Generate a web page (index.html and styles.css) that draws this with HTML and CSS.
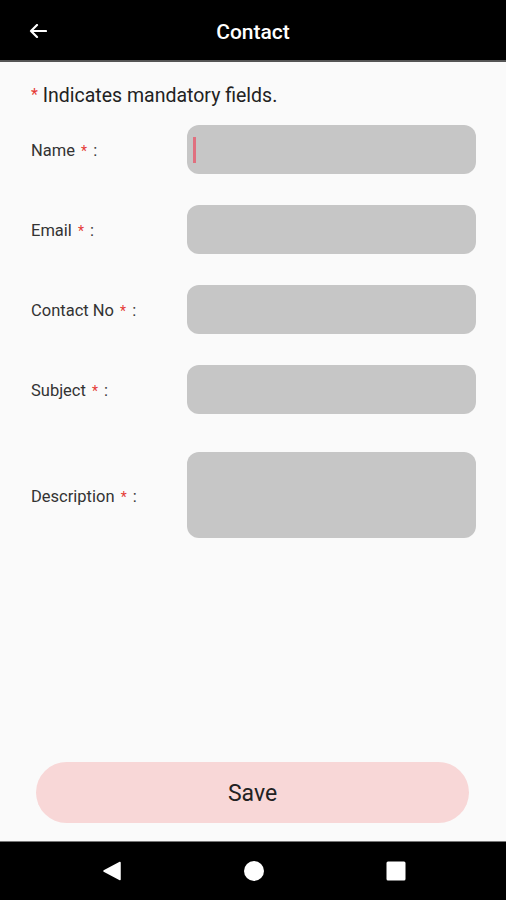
FILE: index.html
```html
<!DOCTYPE html>
<html lang="en">
  <head>
    <meta charset="UTF-8" />
    <title>Contact</title>
    <link rel="stylesheet" href="styles.css">
  </head>
  <body>
    <div class="screen">
      <div class="toolbar">
        <svg class="back" width="18" height="14" viewBox="0 0 18 14">
          <path d="M17 7H2M8 1L2 7l6 6" fill="none" stroke="#fff" stroke-width="2.2" stroke-linecap="round" stroke-linejoin="round" />
        </svg>
        <span class="title">Contact</span>
      </div>

      <div class="content">
        <p class="note"><span class="req">*</span> Indicates mandatory fields.</p>

        <div class="row">
          <label class="label">Name <span class="req">*</span> :</label>
          <div class="field focused"><span class="caret"></span></div>
        </div>
        <div class="row">
          <label class="label">Email <span class="req">*</span> :</label>
          <div class="field"></div>
        </div>
        <div class="row">
          <label class="label">Contact No <span class="req">*</span> :</label>
          <div class="field"></div>
        </div>
        <div class="row">
          <label class="label">Subject <span class="req">*</span> :</label>
          <div class="field"></div>
        </div>
        <div class="row row-desc">
          <label class="label">Description <span class="req">*</span> :</label>
          <div class="field field-area"></div>
        </div>

        <div class="spacer"></div>
        <button class="save" type="button">Save</button>
      </div>

      <div class="navbar">
        <svg width="20" height="20" viewBox="0 0 20 20">
          <path d="M2 10L18 1.5v17z" fill="#fff" stroke="#fff" stroke-width="1.5" stroke-linejoin="round" />
        </svg>
        <svg width="20" height="20" viewBox="0 0 20 20">
          <circle cx="10" cy="10" r="10" fill="#fff" />
        </svg>
        <svg width="20" height="20" viewBox="0 0 20 20">
          <rect x="0.5" y="0.5" width="19" height="19" rx="1.5" fill="#fff" />
        </svg>
      </div>
    </div>
  </body>
</html>
```

FILE: styles.css
```css
body {
  margin: 0;
  font-family: Roboto, 'Noto Sans', sans-serif;
  background: #fafafa;
}
.screen {
  display: flex;
  flex-direction: column;
  width: 506px;
  height: 900px;
}
.toolbar {
  position: relative;
  display: flex;
  align-items: center;
  justify-content: center;
  height: 60px;
  background: #000;
  border-bottom: 2px solid #555;
}
.back {
  position: absolute;
  left: 29px;
  top: 24px;
}
.title {
  color: #fff;
  font-size: 21px;
  font-weight: 500;
  margin-top: 4px;
}
.content {
  flex: 1;
  display: flex;
  flex-direction: column;
  padding: 0 30px 18px 31px;
}
.note {
  margin: 21px 0 20px;
  padding-top: 1px;
  height: 21px;
  line-height: 22px;
  font-size: 19.5px;
  color: #222;
}
.note .req {
  font-size: 16px;
  vertical-align: 2px;
}
.req {
  color: #e53935;
}
.row {
  display: flex;
  align-items: center;
  height: 49px;
  margin-bottom: 31px;
}
.row-desc {
  height: 86px;
  margin-top: 7px;
}
.label {
  width: 156px;
  padding-top: 2px;
  font-size: 16.5px;
  color: #333;
}
.row .req {
  font-size: 14px;
  margin: 0 2px;
}
.field {
  flex: 1;
  height: 49px;
  border-radius: 12px;
  background: #c6c6c6;
  display: flex;
  align-items: center;
}
.field-area {
  height: 86px;
}
.caret {
  width: 2.5px;
  height: 26px;
  margin-left: 6px;
  background: #e0707f;
}
.spacer {
  flex: 1;
}
.save {
  align-self: center;
  width: 433px;
  height: 61px;
  margin-left: -2px;
  padding-top: 2px;
  border: 0;
  border-radius: 31px;
  background: #f8d7d7;
  color: #222;
  font-family: Roboto, 'Noto Sans', sans-serif;
  font-size: 23px;
}
.navbar {
  display: flex;
  align-items: center;
  justify-content: space-between;
  height: 58px;
  padding: 0 100px 0 102px;
  background: #000;
  border-top: 1px solid #777;
}
```
